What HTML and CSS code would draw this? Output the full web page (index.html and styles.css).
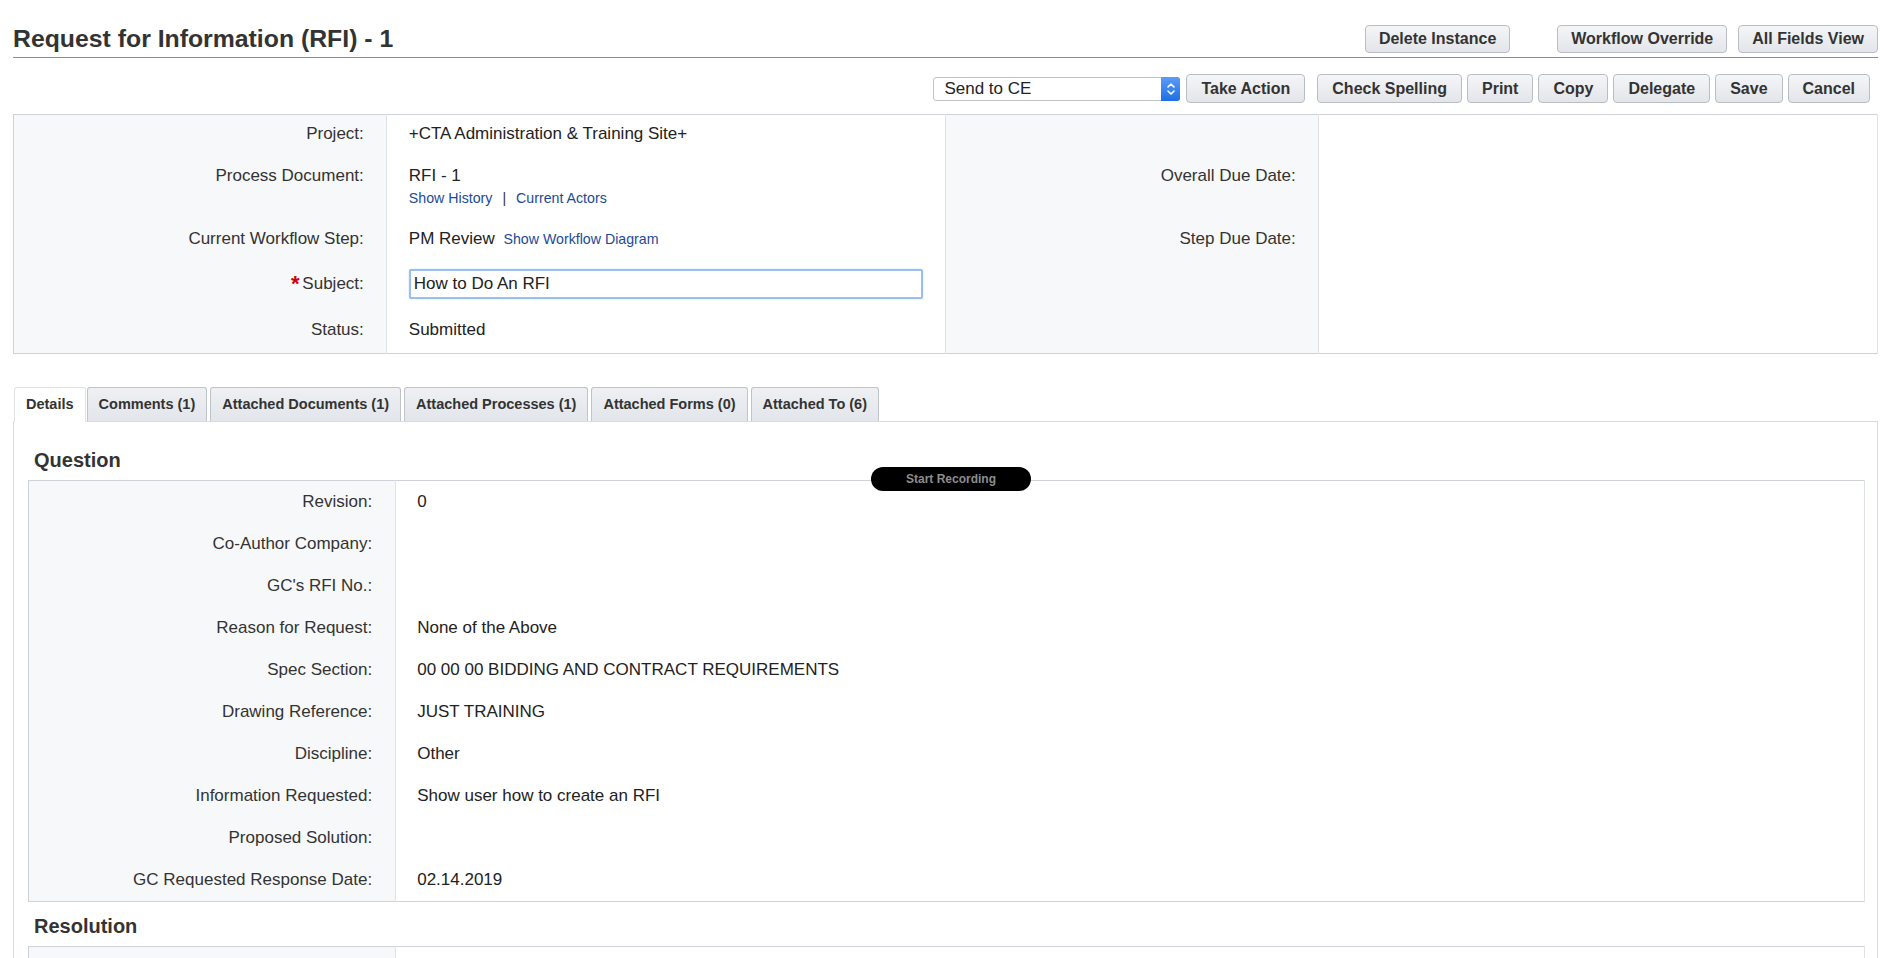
FILE: index.html
```html
<!DOCTYPE html>
<html lang="en">
<head>
    <meta charset="UTF-8">
    <meta name="viewport" content="width=device-width, initial-scale=1.0">
    <title>Request for Information (RFI) - 1</title>
    <link rel="stylesheet" href="styles.css">
</head>
<body>
    <div class="page">
        <div class="title-bar">
            <h1>Request for Information (RFI) - 1</h1>
            <div class="title-actions">
                <button class="btn btn-top">Delete Instance</button>
                <button class="btn btn-top push-right">Workflow Override</button>
                <button class="btn btn-top">All Fields View</button>
            </div>
        </div>

        <div class="toolbar">
            <div class="select-box">
                <span class="select-value">Send to CE</span>
                <span class="select-arrow">
                    <svg width="10" height="16" viewBox="0 0 10 16">
                        <path d="M2 6 L5 3 L8 6" fill="none" stroke="#fff" stroke-width="1.6" stroke-linecap="round" stroke-linejoin="round"/>
                        <path d="M2 10 L5 13 L8 10" fill="none" stroke="#fff" stroke-width="1.6" stroke-linecap="round" stroke-linejoin="round"/>
                    </svg>
                </span>
            </div>
            <button class="btn">Take Action</button>
            <button class="btn spaced">Check Spelling</button>
            <button class="btn">Print</button>
            <button class="btn">Copy</button>
            <button class="btn">Delegate</button>
            <button class="btn">Save</button>
            <button class="btn">Cancel</button>
        </div>

        <!-- document header -->
        <table class="info-table">
            <colgroup>
                <col class="col-label">
                <col class="col-value">
                <col class="col-label">
                <col class="col-value">
            </colgroup>
            <tr>
                <th>Project:</th>
                <td>+CTA Administration &amp; Training Site+</td>
                <th></th>
                <td></td>
            </tr>
            <tr>
                <th>Process Document:</th>
                <td>
                    RFI - 1
                    <div class="links">
                        <a href="#">Show History</a><span class="sep">|</span><a href="#">Current Actors</a>
                    </div>
                </td>
                <th>Overall Due Date:</th>
                <td></td>
            </tr>
            <tr>
                <th>Current Workflow Step:</th>
                <td>PM Review <a href="#" class="small-link">Show Workflow Diagram</a></td>
                <th>Step Due Date:</th>
                <td></td>
            </tr>
            <tr class="input-row">
                <th><span class="required">*</span> Subject:</th>
                <td><input type="text" class="subject-input" value="How to Do An RFI"></td>
                <th></th>
                <td></td>
            </tr>
            <tr>
                <th>Status:</th>
                <td>Submitted</td>
                <th></th>
                <td></td>
            </tr>
        </table>

        <ul class="tabs">
            <li class="active">Details</li>
            <li>Comments (1)</li>
            <li>Attached Documents (1)</li>
            <li>Attached Processes (1)</li>
            <li>Attached Forms (0)</li>
            <li>Attached To (6)</li>
        </ul>

        <div class="tab-panel">
            <h2>Question</h2>
            <table class="detail-table">
                <colgroup>
                    <col class="col-label">
                    <col>
                </colgroup>
                <tr><th>Revision:</th><td>0</td></tr>
                <tr><th>Co-Author Company:</th><td></td></tr>
                <tr><th>GC's RFI No.:</th><td></td></tr>
                <tr><th>Reason for Request:</th><td>None of the Above</td></tr>
                <tr><th>Spec Section:</th><td>00 00 00 BIDDING AND CONTRACT REQUIREMENTS</td></tr>
                <tr><th>Drawing Reference:</th><td>JUST TRAINING</td></tr>
                <tr><th>Discipline:</th><td>Other</td></tr>
                <tr><th>Information Requested:</th><td>Show user how to create an RFI</td></tr>
                <tr><th>Proposed Solution:</th><td></td></tr>
                <tr><th>GC Requested Response Date:</th><td>02.14.2019</td></tr>
            </table>

            <h2 class="section-gap">Resolution</h2>
            <table class="detail-table">
                <colgroup>
                    <col class="col-label">
                    <col>
                </colgroup>
                <tr class="empty-row"><th></th><td></td></tr>
                <tr class="empty-row"><th></th><td></td></tr>
            </table>
        </div>
    </div>

    <div class="recording-pill">Start Recording</div>
</body>
</html>
```

FILE: styles.css
```css
* {
    box-sizing: border-box;
    margin: 0;
    padding: 0;
}

body {
    font-family: "Liberation Sans", Arial, Helvetica, sans-serif;
    color: #2e2e2e;
    background-color: #ffffff;
    font-size: 17px;
}

.page {
    padding: 0 24px 0 13px;
}

/* title row */
.title-bar {
    display: flex;
    justify-content: space-between;
    align-items: flex-end;
    padding-top: 25px;
    padding-bottom: 4px;
    border-bottom: 1px solid #8c8c8c;
}

h1 {
    font-size: 24.8px;
    line-height: 28px;
    font-weight: bold;
    color: #333;
}

.title-actions {
    display: flex;
    gap: 11px;
}

.push-right {
    margin-left: 36px;
}

.btn {
    font-family: "Liberation Sans", Arial, Helvetica, sans-serif;
    font-size: 16px;
    font-weight: bold;
    color: #333;
    height: 29px;
    padding: 0 14px;
    border: 1px solid #b9bdc5;
    border-radius: 4px;
    background: linear-gradient(#f4f5f7, #e3e5ea);
    cursor: pointer;
}

.btn-top {
    height: 28px;
    padding: 0 13px;
}

.toolbar {
    display: flex;
    justify-content: flex-end;
    align-items: center;
    gap: 5px;
    margin-top: 16px;
    padding-right: 8px;
}

.toolbar .spaced {
    margin-left: 7px;
}

.select-box {
    display: flex;
    align-items: stretch;
    width: 247px;
    height: 24px;
    margin-right: 1px;
    border: 1px solid #c3c3c3;
    border-radius: 3px;
    background-color: #fff;
    font-size: 17px;
}

.select-value {
    flex: 1;
    padding-left: 10px;
    line-height: 22px;
    color: #222;
}

.select-arrow {
    display: flex;
    align-items: center;
    justify-content: center;
    width: 19px;
    margin: -1px -1px -1px 0;
    border-radius: 0 3px 3px 0;
    background: linear-gradient(#5a9cf7, #1f6ee6);
}

/* header info table */
.info-table,
.detail-table {
    width: 100%;
    border-collapse: collapse;
    table-layout: fixed;
}

.info-table {
    margin-top: 11px;
    border: 1px solid #cfd3d9;
}

.info-table .col-label {
    width: 20%;
}

.info-table .col-value {
    width: 30%;
}

.info-table th,
.info-table td {
    vertical-align: top;
    line-height: 24px;
    padding: 7px 22px 11px;
}

.info-table .input-row th {
    padding-top: 10px;
}

th {
    font-weight: normal;
    text-align: right;
    color: #333;
    background-color: #f7f8fa;
    border-right: 1px solid #dfe2e6;
}

td {
    text-align: left;
    color: #222;
    border-right: 1px solid #dfe2e6;
}

.links {
    font-size: 14.2px;
    line-height: 21px;
}

a {
    color: #1c4a98;
    text-decoration: none;
}

.small-link {
    font-size: 14.2px;
    margin-left: 4px;
}

.sep {
    color: #333;
    margin: 0 10px;
}

.required {
    color: #cc0000;
    font-weight: bold;
    font-size: 22px;
    vertical-align: -2px;
    margin-right: -2px;
}

.subject-input {
    display: block;
    width: 100%;
    height: 30px;
    margin-bottom: 1px;
    padding: 0 3px;
    font-family: "Liberation Sans", Arial, Helvetica, sans-serif;
    font-size: 17px;
    color: #222;
    border: 2px solid #9cc0ee;
    border-radius: 2px;
    box-shadow: 0 0 2px #b8d3f5;
    outline: none;
}

/* tabs */
.tabs {
    display: flex;
    gap: 3px;
    list-style: none;
    margin-top: 33px;
    padding-left: 1px;
}

.tabs li {
    height: 34px;
    line-height: 32px;
    padding: 0 11px;
    font-size: 14.5px;
    font-weight: bold;
    color: #333;
    border: 1px solid #bfc3ca;
    border-bottom: none;
    border-radius: 3px 3px 0 0;
    background: linear-gradient(#eef0f3, #e2e5ea);
    cursor: pointer;
}

.tabs li.active {
    background: #fff;
    border-color: #e0e2e6;
    margin-right: -2px;
    position: relative;
    z-index: 1;
    height: 35px;
    margin-bottom: -1px;
}

.tab-panel {
    border: 1px solid #d8dbe0;
    padding: 26px 12px 20px 14px;
}

h2 {
    font-size: 20px;
    line-height: 24px;
    font-weight: bold;
    color: #333;
    padding-left: 6px;
    margin-bottom: 8px;
}

h2.section-gap {
    margin-top: 12px;
    margin-bottom: 8px;
}

.detail-table {
    border: 1px solid #cfd3d9;
}

.detail-table .col-label {
    width: 20%;
}

.detail-table th,
.detail-table td {
    line-height: 24px;
    padding: 9px 23px 9px 20px;
}

.detail-table td {
    padding-left: 21px;
}

.detail-table .empty-row th,
.detail-table .empty-row td {
    height: 42px;
}

/* screen recorder overlay */
.recording-pill {
    position: absolute;
    top: 467px;
    left: 871px;
    width: 160px;
    height: 24px;
    line-height: 24px;
    border-radius: 12px;
    background-color: #000;
    color: #8d8d8d;
    font-size: 12px;
    font-weight: bold;
    text-align: center;
}
```
